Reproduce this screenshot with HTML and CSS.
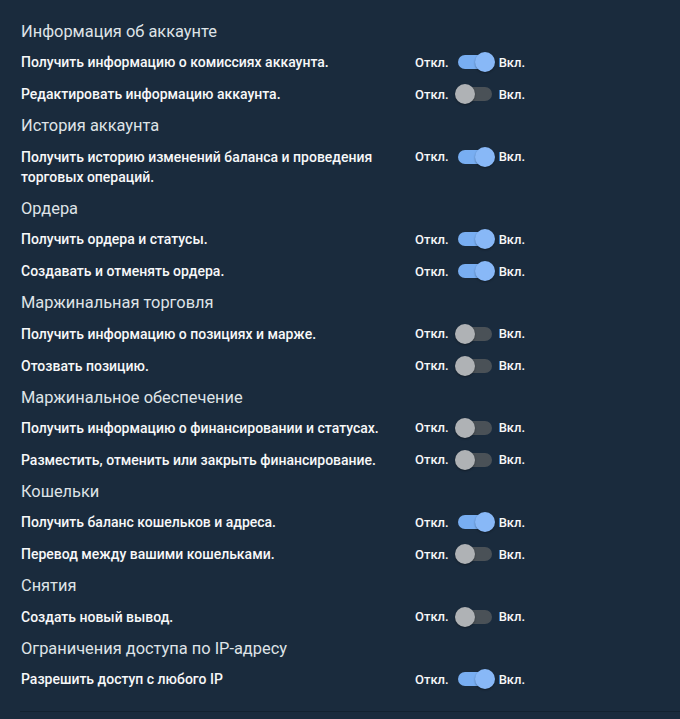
FILE: index.html
```html
<!DOCTYPE html>
<html lang="ru">
<head>
<meta charset="utf-8">
<title>Права API</title>
<link rel="stylesheet" href="styles.css">
</head>
<body>
<div class="perms">
  <div class="section-title">Информация об аккаунте</div>
  <div class="row"><div class="label">Получить информацию о комиссиях аккаунта.</div><div class="toggle"><span class="off-lbl">Откл.</span><span class="switch on"><span class="track"></span><span class="knob"></span></span><span class="on-lbl">Вкл.</span></div></div>
  <div class="row"><div class="label">Редактировать информацию аккаунта.</div><div class="toggle"><span class="off-lbl">Откл.</span><span class="switch"><span class="track"></span><span class="knob"></span></span><span class="on-lbl">Вкл.</span></div></div>

  <div class="section-title">История аккаунта</div>
  <div class="row"><div class="label">Получить историю изменений баланса и проведения торговых операций.</div><div class="toggle"><span class="off-lbl">Откл.</span><span class="switch on"><span class="track"></span><span class="knob"></span></span><span class="on-lbl">Вкл.</span></div></div>

  <div class="section-title">Ордера</div>
  <div class="row"><div class="label">Получить ордера и статусы.</div><div class="toggle"><span class="off-lbl">Откл.</span><span class="switch on"><span class="track"></span><span class="knob"></span></span><span class="on-lbl">Вкл.</span></div></div>
  <div class="row"><div class="label">Создавать и отменять ордера.</div><div class="toggle"><span class="off-lbl">Откл.</span><span class="switch on"><span class="track"></span><span class="knob"></span></span><span class="on-lbl">Вкл.</span></div></div>

  <div class="section-title">Маржинальная торговля</div>
  <div class="row"><div class="label">Получить информацию о позициях и марже.</div><div class="toggle"><span class="off-lbl">Откл.</span><span class="switch"><span class="track"></span><span class="knob"></span></span><span class="on-lbl">Вкл.</span></div></div>
  <div class="row"><div class="label">Отозвать позицию.</div><div class="toggle"><span class="off-lbl">Откл.</span><span class="switch"><span class="track"></span><span class="knob"></span></span><span class="on-lbl">Вкл.</span></div></div>

  <div class="section-title">Маржинальное обеспечение</div>
  <div class="row"><div class="label">Получить информацию о финансировании и статусах.</div><div class="toggle"><span class="off-lbl">Откл.</span><span class="switch"><span class="track"></span><span class="knob"></span></span><span class="on-lbl">Вкл.</span></div></div>
  <div class="row"><div class="label">Разместить, отменить или закрыть финансирование.</div><div class="toggle"><span class="off-lbl">Откл.</span><span class="switch"><span class="track"></span><span class="knob"></span></span><span class="on-lbl">Вкл.</span></div></div>

  <div class="section-title">Кошельки</div>
  <div class="row"><div class="label">Получить баланс кошельков и адреса.</div><div class="toggle"><span class="off-lbl">Откл.</span><span class="switch on"><span class="track"></span><span class="knob"></span></span><span class="on-lbl">Вкл.</span></div></div>
  <div class="row"><div class="label">Перевод между вашими кошельками.</div><div class="toggle"><span class="off-lbl">Откл.</span><span class="switch"><span class="track"></span><span class="knob"></span></span><span class="on-lbl">Вкл.</span></div></div>

  <div class="section-title">Снятия</div>
  <div class="row"><div class="label">Создать новый вывод.</div><div class="toggle"><span class="off-lbl">Откл.</span><span class="switch"><span class="track"></span><span class="knob"></span></span><span class="on-lbl">Вкл.</span></div></div>

  <div class="section-title">Ограничения доступа по IP-адресу</div>
  <div class="row"><div class="label">Разрешить доступ с любого IP</div><div class="toggle"><span class="off-lbl">Откл.</span><span class="switch on"><span class="track"></span><span class="knob"></span></span><span class="on-lbl">Вкл.</span></div></div>
</div>
</body>
</html>
```

FILE: styles.css
```css
html, body {
  margin: 0;
  padding: 0;
  background: #1a2b3d;
}
body {
  font-family: Roboto, "Noto Sans", "Liberation Sans", sans-serif;
  color: #ffffff;
  height: 719px;
  overflow: hidden;
}
.perms {
  margin-left: 20px;
  padding: 17px 0 15px 1px;
  border-bottom: 1px solid #132230;
}
.section-title {
  font-size: 16.4px;
  line-height: 20px;
  padding: 5px 0 5.4px;
  color: #dfe3e7;
  font-weight: 400;
}
.row {
  display: flex;
  align-items: flex-start;
  padding: 5px 0 7px;
}
.label {
  flex: 0 0 394px;
  box-sizing: border-box;
  padding-right: 10px;
  font-size: 14px;
  line-height: 20px;
  font-weight: 500;
  color: #f7f8f9;
}
.toggle {
  display: flex;
  align-items: center;
  height: 20px;
  font-size: 13px;
  font-weight: 500;
  color: #f7f8f9;
}
.off-lbl {
  margin-right: 6px;
}
.on-lbl {
  margin-left: 4px;
}
.switch {
  position: relative;
  width: 40px;
  height: 20px;
  display: inline-block;
}
.track {
  position: absolute;
  left: 3px;
  top: 3px;
  width: 34px;
  height: 14px;
  border-radius: 7px;
  background: #4a5157;
}
.knob {
  position: absolute;
  left: 0;
  top: 0;
  width: 20px;
  height: 20px;
  border-radius: 50%;
  background: #afb2b5;
  box-shadow: 0 1px 2px rgba(0,0,0,0.35);
}
.switch.on .track {
  background: #78aef2;
}
.switch.on .knob {
  left: 20px;
  background: #88b8f7;
}
```
